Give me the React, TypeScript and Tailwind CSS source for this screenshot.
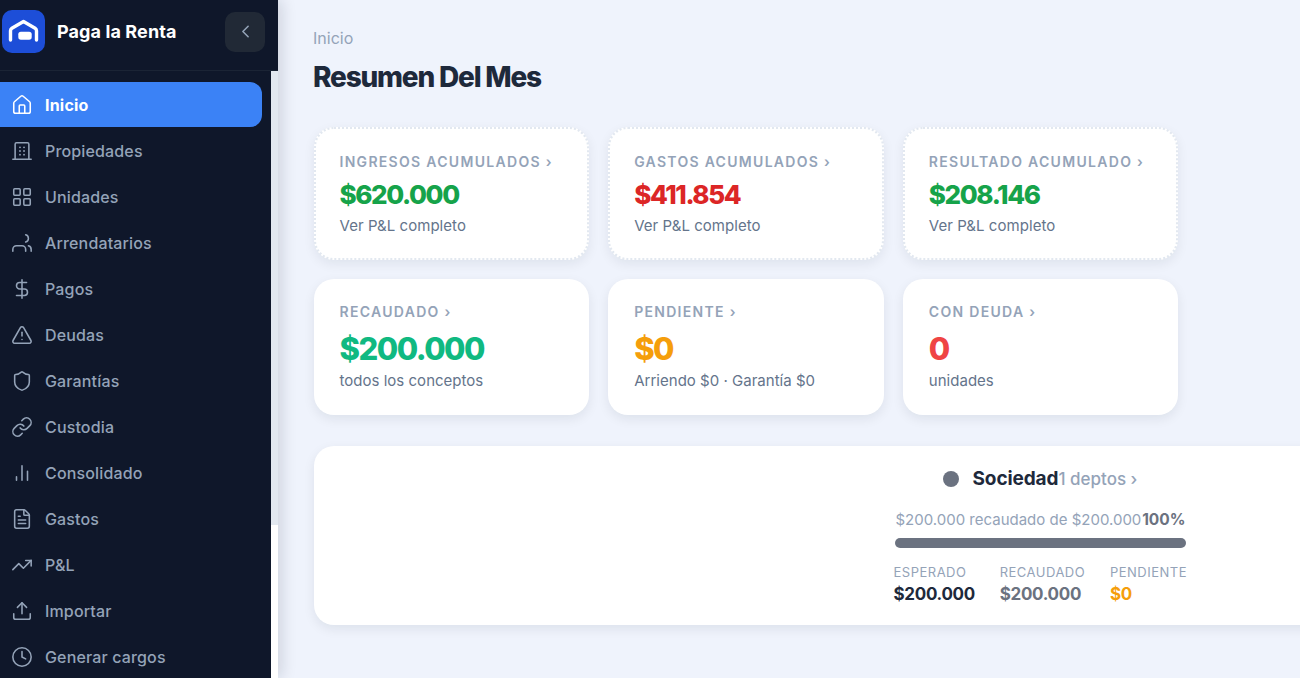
import React from "react";
import {
  ChevronLeft,
  Clock,
  DollarSign,
  FileText,
  House,
  LayoutGrid,
  Link,
  Shield,
  TrendingUp,
  TriangleAlert,
  Upload,
} from "lucide-react";

type IconProps = { size?: number; strokeWidth?: number };

// lucide's users without the head circle, that is how the app shows it
const TenantsIcon = ({ size = 22, strokeWidth = 1.7 }: IconProps) => (
  <svg
    width={size}
    height={size}
    viewBox="0 0 24 24"
    fill="none"
    stroke="currentColor"
    strokeWidth={strokeWidth}
    strokeLinecap="round"
    strokeLinejoin="round"
  >
    <path d="M16 3.128a4 4 0 0 1 0 7.744" />
    <path d="M16 21v-2a4 4 0 0 0-4-4H6a4 4 0 0 0-4 4v2" />
    <path d="M22 21v-2a4 4 0 0 0-3-3.87" />
  </svg>
);

const BuildingIcon = ({ size = 22, strokeWidth = 1.7 }: IconProps) => (
  <svg
    width={size}
    height={size}
    viewBox="0 0 24 24"
    fill="none"
    stroke="currentColor"
    strokeWidth={strokeWidth}
    strokeLinecap="round"
    strokeLinejoin="round"
  >
    <path d="M4.5 21V4.5A1.5 1.5 0 0 1 6 3h12a1.5 1.5 0 0 1 1.5 1.5V21" />
    <path d="M2 21h20" />
    <path strokeWidth={2} d="M9.8 8h.01M14.2 8h.01M9.8 12h.01M14.2 12h.01M9.8 16h.01M14.2 16h.01" />
  </svg>
);

const BarsIcon = ({ size = 22, strokeWidth = 1.7 }: IconProps) => (
  <svg
    width={size}
    height={size}
    viewBox="0 0 24 24"
    fill="none"
    stroke="currentColor"
    strokeWidth={strokeWidth}
    strokeLinecap="round"
  >
    <path d="M6 20v-4M12 20V4M18 20V10" />
  </svg>
);

const navItems = [
  { label: "Inicio", icon: House, active: true },
  { label: "Propiedades", icon: BuildingIcon },
  { label: "Unidades", icon: LayoutGrid },
  { label: "Arrendatarios", icon: TenantsIcon },
  { label: "Pagos", icon: DollarSign },
  { label: "Deudas", icon: TriangleAlert },
  { label: "Garantías", icon: Shield },
  { label: "Custodia", icon: Link },
  { label: "Consolidado", icon: BarsIcon },
  { label: "Gastos", icon: FileText },
  { label: "P&L", icon: TrendingUp },
  { label: "Importar", icon: Upload },
  { label: "Generar cargos", icon: Clock },
];

const topCards = [
  { label: "INGRESOS ACUMULADOS ›", value: "$620.000", color: "text-[#16a34a]", sub: "Ver P&L completo" },
  { label: "GASTOS ACUMULADOS ›", value: "$411.854", color: "text-[#dc2626]", sub: "Ver P&L completo" },
  { label: "RESULTADO ACUMULADO ›", value: "$208.146", color: "text-[#16a34a]", sub: "Ver P&L completo" },
];

const bottomCards = [
  { label: "RECAUDADO ›", value: "$200.000", color: "text-[#10b981]", sub: "todos los conceptos" },
  { label: "PENDIENTE ›", value: "$0", color: "text-[#f59e0b]", sub: "Arriendo $0 · Garantía $0" },
  { label: "CON DEUDA ›", value: "0", color: "text-[#ef4444]", sub: "unidades" },
];

export default function App() {
  return (
    <div className="flex h-[678px] w-[1300px] overflow-hidden bg-[#eff3fc] font-['Inter',sans-serif]">
      {/* sidebar */}
      <aside className="flex h-full w-[278px] shrink-0 flex-col bg-[#0f172a] shadow-[4px_0_14px_rgba(15,23,42,0.14)]">
        <div className="flex h-[71px] shrink-0 items-center justify-between border-b border-[#1b2435] pb-[7px] pl-[2px] pr-[13px]">
          <div className="flex items-center gap-[12px]">
            <div className="flex h-[43px] w-[43px] items-center justify-center rounded-[10px] bg-[#1d4ed8] text-white">
              <svg width="43" height="43" viewBox="0 0 43 43" fill="none">
                <path
                  d="M8.5 30V20.8q0-1.6 1.4-2.5L21.5 11.5l11.6 6.8q1.4.9 1.4 2.5V30"
                  stroke="currentColor"
                  strokeWidth="3.4"
                  strokeLinecap="round"
                  strokeLinejoin="round"
                />
                <rect x="16.3" y="21.7" width="13.4" height="8" rx="2.6" fill="currentColor" />
              </svg>
            </div>
            <span className="text-[18px] font-bold tracking-[0.1px] text-white">Paga la Renta</span>
          </div>
          <button className="flex h-10 w-10 items-center justify-center rounded-[10px] bg-[#212936] text-[#94a3b8]">
            <ChevronLeft size={21} strokeWidth={1.8} />
          </button>
        </div>
        <div className="flex min-h-0 flex-1">
          <nav className="flex w-[271px] shrink-0 flex-col gap-[1px] overflow-hidden bg-[#0f172a] pr-[9px] pt-[11px]">
            {navItems.map((item) => (
              <a
                key={item.label}
                className={
                  item.active
                    ? "flex h-[45px] shrink-0 items-center gap-[12px] rounded-r-[12px] bg-[#3b82f6] pl-[11px] text-[16px] font-bold tracking-[0.2px] text-white"
                    : "flex h-[45px] shrink-0 items-center gap-[12px] pl-[11px] text-[16px] font-medium tracking-[0.15px] text-[#94a3b8]"
                }
              >
                <item.icon size={22} strokeWidth={1.7} />
                {item.label}
              </a>
            ))}
          </nav>
          <div className="h-full w-[7px] bg-white">
            <div className="h-[454px] w-full bg-[#e2e8f0]" />
          </div>
        </div>
      </aside>

      {/* main */}
      <main className="min-w-0 flex-1 pl-[35.5px] pt-[28px]">
        <div className="-ml-[0.5px] text-[16px] leading-[20px] text-[#94a3b8]">Inicio</div>
        <h1 className="-ml-[0.5px] mt-[10px] text-[28px] font-extrabold leading-[38px] tracking-[-1.2px] text-[#1e293b]">
          Resumen Del Mes
        </h1>

        <div className="mt-[31px] grid w-[865px] grid-cols-3 gap-x-[19px] gap-y-[19px]">
          {topCards.map((c) => (
            <div
              key={c.label}
              className="h-[133px] rounded-[20px] border-2 border-dotted border-[#e2e8f0] bg-white px-[24px] pt-[23px] shadow-[0_4px_12px_rgba(15,23,42,0.07)]"
            >
              <div className="text-[14px] font-semibold leading-[20px] tracking-[1.3px] text-[#94a3b8]">{c.label}</div>
              <div className={`mt-[5px] text-[26px] font-extrabold leading-[36px] tracking-[-1.4px] ${c.color}`}>{c.value}</div>
              <div className="mt-[2px] text-[15px] leading-[22px] tracking-[0.05px] text-[#64748b]">{c.sub}</div>
            </div>
          ))}
          {bottomCards.map((c) => (
            <div
              key={c.label}
              className="h-[136px] rounded-[20px] bg-white px-[26px] pt-[23px] shadow-[0_4px_12px_rgba(15,23,42,0.08)]"
            >
              <div className="text-[14px] font-semibold leading-[20px] tracking-[1.3px] text-[#94a3b8]">{c.label}</div>
              <div className={`mt-[6px] text-[31px] font-extrabold leading-[42px] tracking-[-1.5px] ${c.color}`}>{c.value}</div>
              <div className="text-[15px] leading-[22px] tracking-[0.02px] text-[#64748b]">{c.sub}</div>
            </div>
          ))}
        </div>

        {/* panel */}
        <div className="mt-[31px] flex h-[179px] w-[1100px] flex-col rounded-[20px] bg-white pl-[580px] shadow-[0_4px_12px_rgba(15,23,42,0.08)]">
          <div className="mt-[21px] flex items-center">
            <span className="ml-[49px] h-[16px] w-[16px] rounded-full bg-[#6b7280]" />
            <span className="ml-[14px] text-[19px] font-bold leading-[24px] tracking-[-0.1px] text-[#1e293b]">Sociedad</span>
            <span className="text-[17px] font-medium leading-[24px] text-[#94a3b8]">1 deptos ›</span>
          </div>
          <div className="mt-[19px] flex w-[292px] items-center justify-between pl-[2px] text-[15px] leading-[20px] text-[#94a3b8]">
            <span>$200.000 recaudado de $200.000</span>
            <span className="text-[15.5px] font-bold text-[#6b7280]">100%</span>
          </div>
          <div className="ml-[1px] mt-[8px] h-[10px] w-[291px] rounded-full bg-[#6b7280]" />
          <div className="mt-[16px] flex w-[293.5px] justify-between">
            <div>
              <div className="text-[13px] leading-[16px] tracking-[0.5px] text-[#94a3b8]">ESPERADO</div>
              <div className="mt-[2px] text-[17px] font-bold leading-[24px] tracking-[-0.3px] text-[#1e293b]">$200.000</div>
            </div>
            <div>
              <div className="text-[13px] leading-[16px] tracking-[0.5px] text-[#94a3b8]">RECAUDADO</div>
              <div className="mt-[2px] text-[17px] font-bold leading-[24px] tracking-[-0.3px] text-[#6b7280]">$200.000</div>
            </div>
            <div>
              <div className="text-[13px] leading-[16px] tracking-[0.5px] text-[#94a3b8]">PENDIENTE</div>
              <div className="mt-[2px] text-[17px] font-bold leading-[24px] tracking-[-0.3px] text-[#f59e0b]">$0</div>
            </div>
          </div>
        </div>
      </main>
    </div>
  );
}
